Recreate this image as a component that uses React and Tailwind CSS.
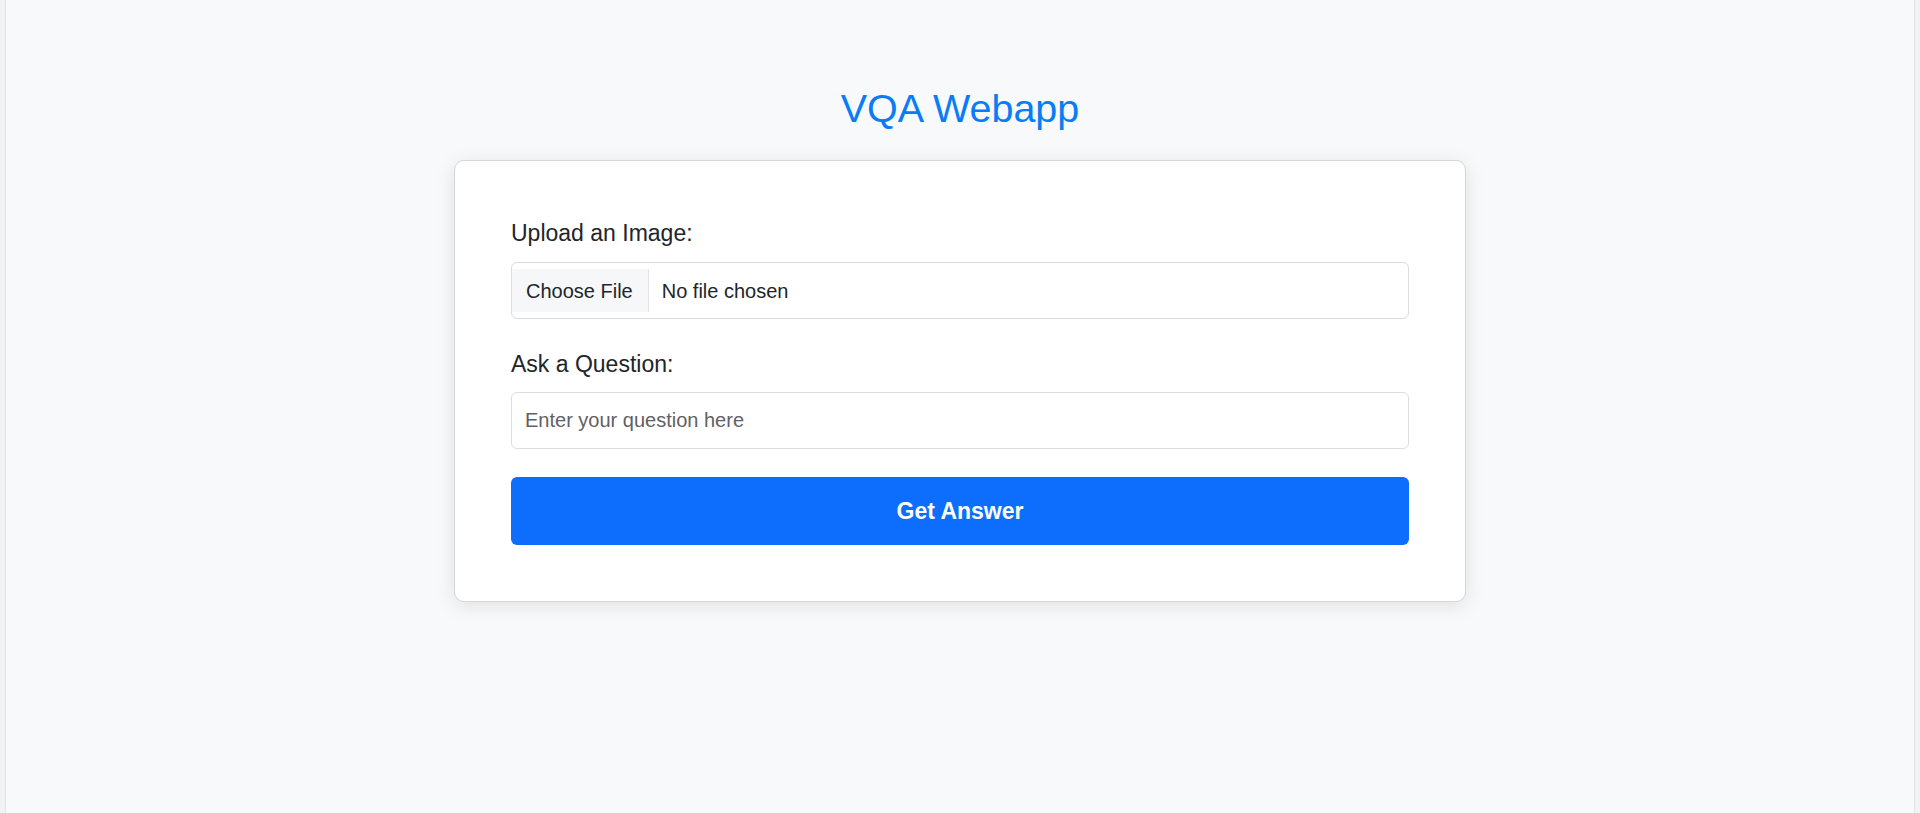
export default function App() {
  return (
    <div className="h-[813px] overflow-hidden bg-[#f2f2f2] px-[5px] font-['Liberation_Sans',Arial,sans-serif]">
      <div className="flex h-full flex-col items-center border-x border-[#e2e2e2] bg-[#f8f9fa]">
        <h1 className="mt-[86px] text-[39.5px] font-normal leading-[45px] text-[#0a7cf5]">
          VQA Webapp
        </h1>
        <div className="mt-[29px] w-[1012px] rounded-[10px] border border-[#d6d6d6] bg-white px-[56px] pb-[56px] pt-[59px] shadow-[0_4px_20px_rgba(0,0,0,0.1)]">
          <label className="block text-[23px] leading-[26px] text-[#212529]">
            Upload an Image:
          </label>
          <div className="mt-[16px] flex h-[57px] items-stretch rounded-[6px] border border-[#dcdcdc] py-[6px] text-[20px] text-[#212529]">
            <div className="flex items-center border-r border-[#e3e3e3] bg-[#f6f7f9] pl-[14px] pr-[15px]">
              Choose File
            </div>
            <div className="flex items-center pl-[13px]">No file chosen</div>
          </div>
          <label className="mt-[32px] block text-[23px] leading-[26px] text-[#212529]">
            Ask a Question:
          </label>
          <input
            type="text"
            placeholder="Enter your question here"
            className="mt-[15px] block h-[57px] w-full rounded-[6px] border border-[#dcdcdc] px-[13px] text-[20px] text-[#212529] outline-none placeholder:text-[#5f6164]"
          />
          <button className="mt-[28px] flex h-[68px] w-full items-center justify-center rounded-[6px] bg-[#0d6efd] text-[23px] font-bold text-white">
            Get Answer
          </button>
        </div>
      </div>
    </div>
  );
}
